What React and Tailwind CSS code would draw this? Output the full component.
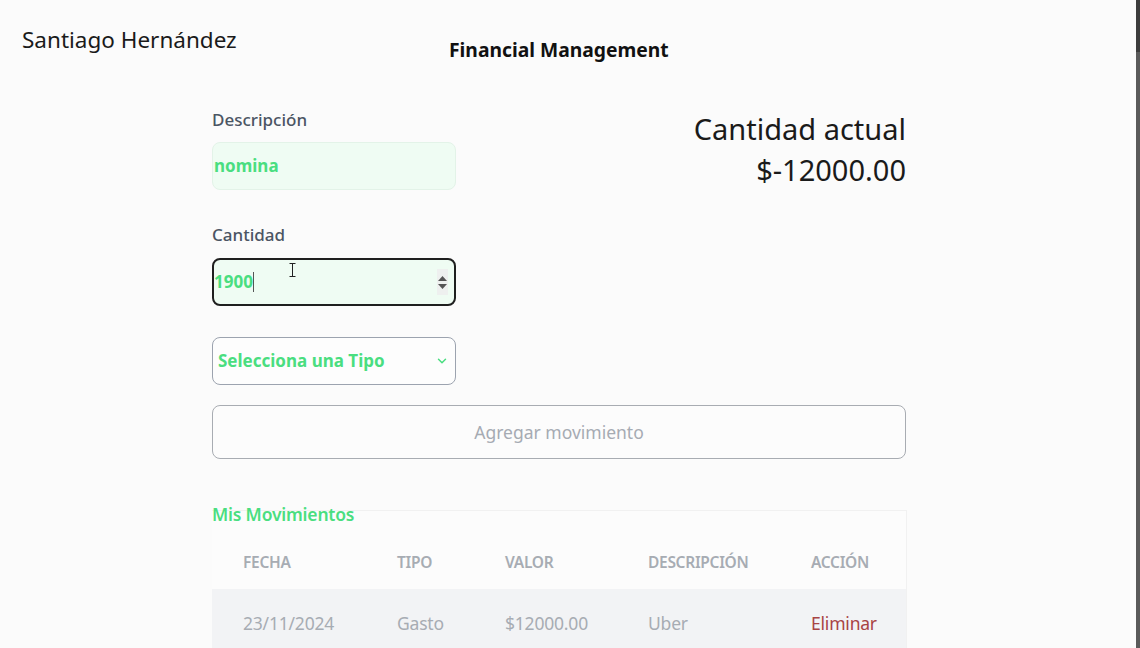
import React from 'react';
import { ChevronDown } from 'lucide-react';

const movements = [
  { fecha: '23/11/2024', tipo: 'Gasto', valor: '$12000.00', descripcion: 'Uber' },
];

const font = { fontFamily: '"Noto Sans", "Open Sans", sans-serif' };

const App = () => {
  return (
    <div className="relative h-[648px] w-[1140px] overflow-hidden bg-[#fbfbfb] text-[#1f1f1f]" style={font}>
      {/* Header */}
      <div className="flex items-start pl-[22px] pt-[26px]">
        <h1 className="w-[214px] whitespace-nowrap text-[22.5px] leading-[28px] text-[#1a1a1a]">Santiago Hernández</h1>
        <h2 className="ml-[213px] mt-[10px] whitespace-nowrap text-[19.3px] font-bold leading-[28px] text-[#111]">
          Financial Management
        </h2>
      </div>

      {/* Form + balance */}
      <div className="ml-[212px] mt-[45px] w-[694px]">
        <div className="flex justify-between">
          <div className="flex w-[244px] flex-col">
            <label className="text-[17px] font-medium leading-[22px] text-[#4b5563]">Descripción</label>
            <div className="mt-[11px] flex h-[48px] items-center rounded-lg border border-[#e3f3e8] bg-[#effcf3]">
              <span className="pl-px text-[17px] font-bold text-[#4ade80]">nomina</span>
            </div>

            <label className="mt-[34px] text-[17px] font-medium leading-[22px] text-[#4b5563]">Cantidad</label>
            <div className="relative mt-[12px] flex h-[48px] items-center rounded-lg border-2 border-[#1f1f1f] bg-[#effcf3]">
              <span className="text-[17px] font-bold text-[#4ade80]">1900</span>
              <span className="h-[20px] w-px bg-[#555]" />
              <div className="ml-auto mr-[6px] flex h-[26px] w-[11px] flex-col items-center justify-center gap-[3px] bg-[#eef0ef]">
                <svg width="9" height="5" viewBox="0 0 9 5"><path d="M4.5 0L9 5H0z" fill="#555" /></svg>
                <svg width="9" height="5" viewBox="0 0 9 5"><path d="M0 0h9L4.5 5z" fill="#555" /></svg>
              </div>
              {/* mouse I-beam */}
              <svg className="absolute left-[75px] top-[3px]" width="7" height="14" viewBox="0 0 7 14">
                <path d="M0.5 0.5h6M3.5 0.5v13M0.5 13.5h6" stroke="#222" strokeWidth="1" fill="none" />
              </svg>
            </div>

            <div className="mt-[31px] flex h-[48px] items-center justify-between rounded-lg border border-[#9ca3af] bg-[#fdfdfd] pl-[5px] pr-[6px]">
              <span className="text-[17px] font-bold text-[#4ade80]">Selecciona una Tipo</span>
              <ChevronDown className="h-[14px] w-[14px] text-[#4ade80]" strokeWidth={2.5} />
            </div>
          </div>

          <div className="-mt-px flex flex-col items-end text-[29px] leading-[41px] text-[#1a1a1a]">
            <span>Cantidad actual</span>
            <span>$-12000.00</span>
          </div>
        </div>

        <button className="mt-[20px] flex h-[54px] w-full items-center justify-center rounded-lg border border-[#a8acb2] bg-[#fcfcfc] text-[17.5px] text-[#a6abb3]">
          Agregar movimiento
        </button>

        {/* Movements */}
        <h3 className="relative z-10 mt-[43px] text-[17.5px] font-semibold leading-[24px] tracking-[-0.2px] text-[#4ade80]">Mis Movimientos</h3>
        <div className="-mt-[16px] w-[695px] border-r border-t border-[#f1f1f1] bg-[#fcfcfc]">
          <table className="w-full table-fixed text-left">
            <thead>
              <tr className="text-[15.5px] uppercase text-[#a7acb3]">
                <th className="h-[78px] w-[185px] pl-[31px] pt-[26px] font-semibold tracking-[-0.3px]">Fecha</th>
                <th className="h-[78px] w-[108px] pt-[26px] font-semibold tracking-[-0.3px]">Tipo</th>
                <th className="h-[78px] w-[143px] pt-[26px] font-semibold tracking-[-0.3px]">Valor</th>
                <th className="h-[78px] w-[163px] pt-[26px] font-semibold tracking-[-0.3px]">Descripción</th>
                <th className="h-[78px] pt-[26px] font-semibold tracking-[-0.3px]">Acción</th>
              </tr>
            </thead>
            <tbody>
              {movements.map((m, i) => (
                <tr key={i} className="h-[68px] bg-[#f2f3f5] text-[17.5px] text-[#a7acb3]">
                  <td className="pl-[31px] tracking-[-0.2px]">{m.fecha}</td>
                  <td className="tracking-[-0.2px]">{m.tipo}</td>
                  <td className="tracking-[-0.2px]">{m.valor}</td>
                  <td className="tracking-[-0.2px]">{m.descripcion}</td>
                  <td className="tracking-[-0.2px] text-[#a84444]">Eliminar</td>
                </tr>
              ))}
            </tbody>
          </table>
        </div>
      </div>

      {/* window edge */}
      <div className="absolute right-0 top-0 flex h-full w-[4px] flex-col bg-[#5a5a5a]">
        <div className="h-[52px] bg-[#3c3c3c]" />
      </div>
    </div>
  );
};

export default App;
